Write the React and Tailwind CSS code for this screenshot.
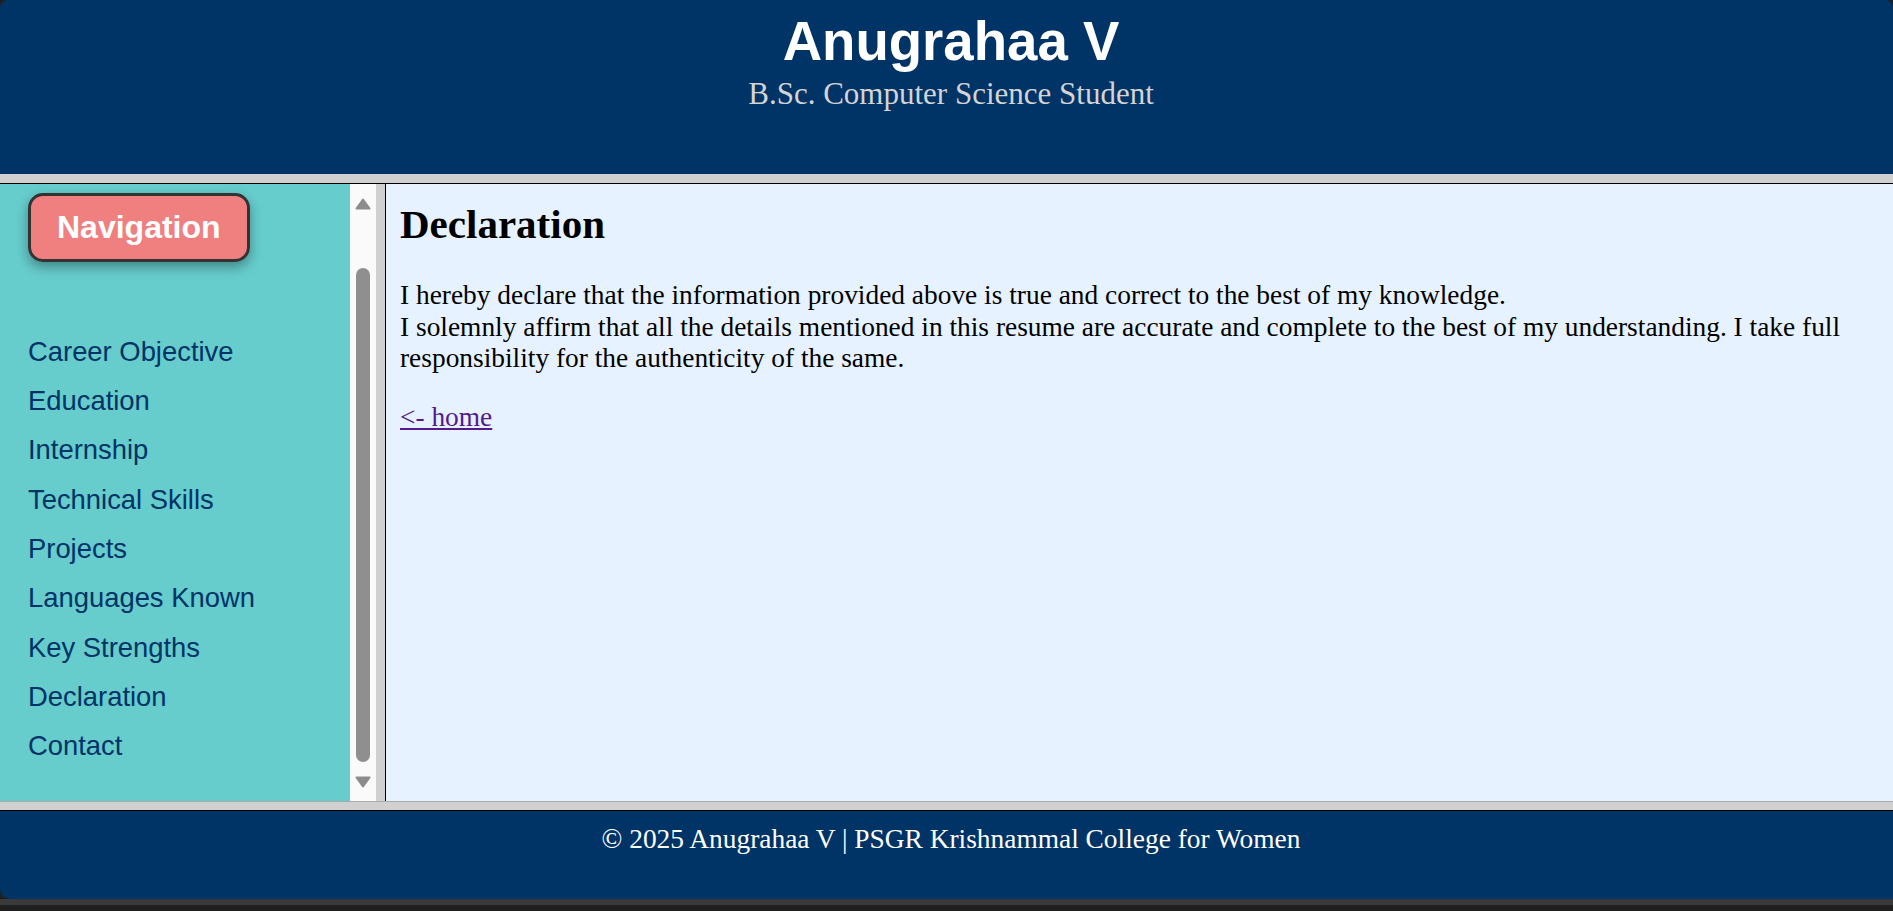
const navItems = [
  "Career Objective",
  "Education",
  "Internship",
  "Technical Skills",
  "Projects",
  "Languages Known",
  "Key Strengths",
  "Declaration",
  "Contact",
];

const sans = { fontFamily: '"Liberation Sans", Arial, sans-serif' };
const serif = { fontFamily: '"Liberation Serif", "Times New Roman", serif' };

function Arrow({ down }) {
  return (
    <svg width="16" height="12" viewBox="0 0 16 12" className="block">
      <polygon
        points={down ? "1.5,1.5 14.5,1.5 8,10.5" : "8,1.5 14.5,10.5 1.5,10.5"}
        fill="#8c8c8c"
        stroke="#8c8c8c"
        strokeWidth="2"
        strokeLinejoin="round"
      />
    </svg>
  );
}

export default function App() {
  return (
    <div className="w-[1893px] h-[911px] bg-[#1f1f1f] flex flex-col overflow-hidden">
      {/* header frame */}
      <header className="h-[174px] bg-[#003366] rounded-t-[8px] flex flex-col items-center pl-[9px]">
        <h1
          className="mt-[11px] text-[54.6px] leading-[62.5px] font-bold text-white"
          style={sans}
        >
          Anugrahaa V
        </h1>
        <p className="mt-[2px] text-[31px] leading-[35.5px] text-[#d4d4d4]" style={serif}>
          B.Sc. Computer Science Student
        </p>
      </header>

      <div className="h-[9px] bg-[#d0d0d0]" />
      <div className="h-px bg-black" />

      <div className="flex h-[617px]">
        {/* nav frame */}
        <nav className="w-[350px] bg-[#66cccc] pl-[28px] pt-[9px] flex flex-col" style={sans}>
          <div className="self-start px-[26px] py-[13px] bg-[#f08080] border-[3px] border-[#333333] rounded-[15px] shadow-[0_5px_12px_rgba(0,0,0,0.35)]">
            <span className="block text-[32px] leading-[36.8px] font-bold text-white">
              Navigation
            </span>
          </div>
          <ul className="mt-[74px] flex flex-col gap-[17.8px]">
            {navItems.map((item) => (
              <li key={item} className="text-[27.4px] leading-[31.5px] text-[#003366]">
                <a className="cursor-pointer">{item}</a>
              </li>
            ))}
          </ul>
        </nav>

        {/* scrollbar */}
        <div className="w-[26px] bg-[#fafafa] flex flex-col items-center pt-[14px]">
          <Arrow />
          <div className="mt-[58px] h-[494px] w-[14px] rounded-full bg-[#8f8f8f]" />
          <div className="mt-[14px]">
            <Arrow down />
          </div>
        </div>

        <div className="w-[9px] bg-[#d0d0d0]" />
        <div className="w-px bg-black" />

        {/* content frame */}
        <main className="flex-1 bg-[#e6f2ff] pt-[17px] pl-[14px] pr-[14px] text-black" style={serif}>
          <h2 className="text-[41px] leading-[47px] font-bold mb-[32px]">Declaration</h2>
          <p className="text-[27.4px] leading-[31.5px]">
            I hereby declare that the information provided above is true and correct to the
            best of my knowledge.
            <br />
            I solemnly affirm that all the details mentioned in this resume are accurate and
            complete to the best of my understanding. I take full responsibility for the
            authenticity of the same.
          </p>
          <p className="mt-[27px] text-[27.4px] leading-[31.5px]">
            <a className="text-[#551a8b] underline cursor-pointer">&lt;- home</a>
          </p>
        </main>
      </div>

      <div className="h-px bg-[#acacac]" />
      <div className="h-[8px] bg-[#d0d0d0]" />
      <div className="h-px bg-black" />

      {/* footer frame */}
      <footer className="h-[88px] bg-[#003366] rounded-bl-[10px] pt-[13px] pl-[9px] text-center">
        <p className="text-[27.4px] leading-[31.5px] text-white" style={serif}>
          © 2025 Anugrahaa V | PSGR Krishnammal College for Women
        </p>
      </footer>
      <div className="h-[6px] bg-[#3a3a3a]" />
    </div>
  );
}
